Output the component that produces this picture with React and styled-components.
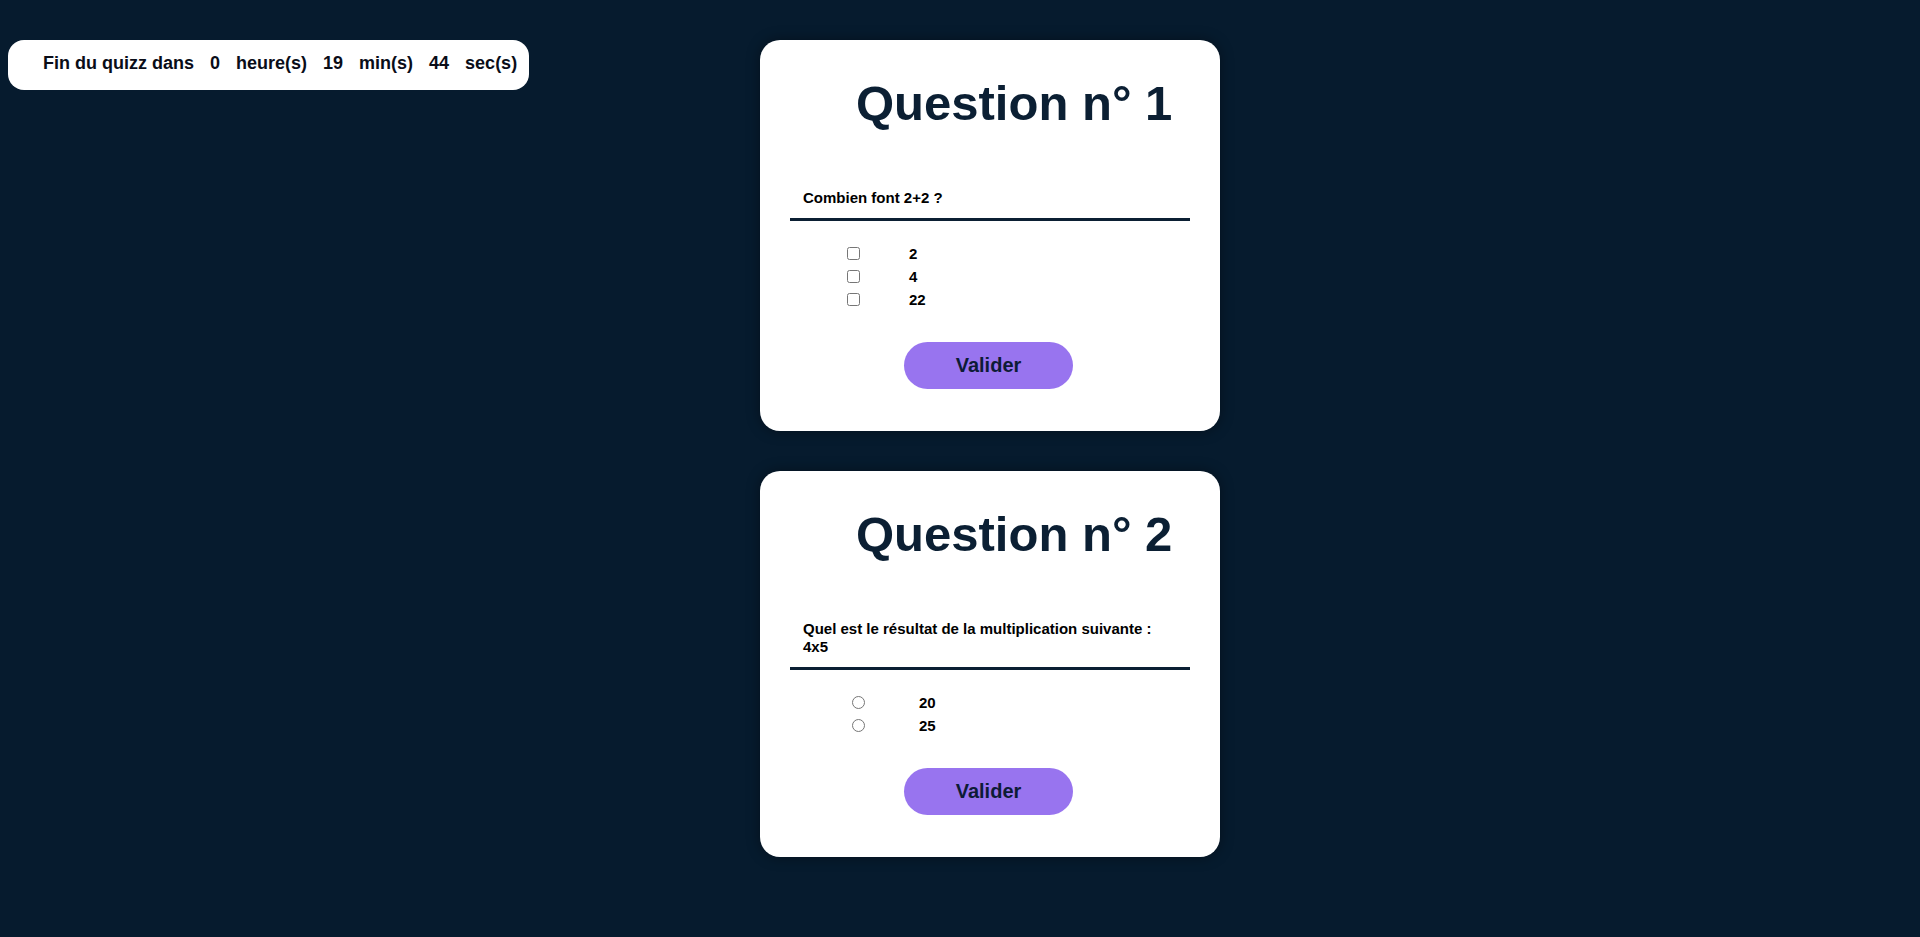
import React from 'react';
import styled, { createGlobalStyle, css } from 'styled-components';

const GlobalStyle = createGlobalStyle`
  body {
    margin: 0;
    background: #061b2e;
    font-family: "Liberation Sans", Arial, sans-serif;
  }
`;

const navy = '#0b1f33';

const questions = [
  {
    id: 1,
    text: 'Combien font 2+2 ?',
    kind: 'checkbox',
    answers: ['2', '4', '22'],
  },
  {
    id: 2,
    text: 'Quel est le résultat de la multiplication suivante : 4x5',
    kind: 'radio',
    answers: ['20', '25'],
  },
];

const Page = styled.div`
  display: flex;
  align-items: flex-start;
  padding: 40px 8px 79px;
  min-height: 937px;
  box-sizing: border-box;
`;

const Timer = styled.div`
  display: flex;
  align-items: center;
  gap: 16px;
  width: 521px;
  height: 50px;
  box-sizing: border-box;
  padding: 0 14px 3px 35px;
  background: #ffffff;
  border-radius: 16px;
  color: #0a0d18;
  font-size: 18px;
  font-weight: 700;
  white-space: nowrap;
`;

const Column = styled.main`
  display: flex;
  flex-direction: column;
  gap: 40px;
  margin-left: 231px;
  width: 460px;
`;

const Card = styled.section`
  background: #ffffff;
  border-radius: 20px;
  padding: 36px 30px 42px;
  box-shadow: 0 0 14px rgba(0, 0, 0, 0.4);
`;

const Title = styled.h1`
  margin: 0;
  padding-left: 66px;
  color: ${navy};
  font-size: 49px;
  font-weight: 700;
  line-height: 55px;
`;

const QuestionText = styled.p`
  margin: 58px 0 0;
  padding: 0 13px 11px;
  border-bottom: 3px solid ${navy};
  color: #000000;
  font-size: 15px;
  font-weight: 700;
  line-height: 18px;
`;

const Answers = styled.ul`
  list-style: none;
  margin: 21px 0 0;
  padding: 0;
`;

const AnswerRow = styled.li`
  display: flex;
  align-items: center;
  height: 23px;
  padding-left: 57px;
  gap: 49px;
  font-size: 15px;
  font-weight: 700;
  color: #000000;

  ${(props) =>
    props.$kind === 'radio' &&
    css`
      padding-left: 62px;
      gap: 54px;
    `}

  input {
    margin: 0;
    width: 13px;
    height: 13px;
  }
`;

const Footer = styled.div`
  display: flex;
  justify-content: center;
  margin-top: 31px;
  padding-right: 3px;
`;

const ValidateButton = styled.button`
  width: 169px;
  height: 47px;
  border: none;
  border-radius: 24px;
  background: #9874ef;
  color: #0d1b36;
  font-family: inherit;
  font-size: 20px;
  font-weight: 700;
  cursor: pointer;
`;

const QuestionCard = ({ question }) => {
  return (
    <Card>
      <Title>Question n° {question.id}</Title>
      <QuestionText>{question.text}</QuestionText>
      <Answers>
        {question.answers.map((answer) => (
          <AnswerRow key={answer} $kind={question.kind}>
            <input type={question.kind} name={`q${question.id}`} />
            <span>{answer}</span>
          </AnswerRow>
        ))}
      </Answers>
      <Footer>
        <ValidateButton>Valider</ValidateButton>
      </Footer>
    </Card>
  );
};

const App = () => {
  return (
    <>
      <GlobalStyle />
      <Page>
        <Timer>
          <span>Fin du quizz dans</span>
          <span>0</span>
          <span>heure(s)</span>
          <span>19</span>
          <span>min(s)</span>
          <span>44</span>
          <span>sec(s)</span>
        </Timer>
        <Column>
          {questions.map((q) => (
            <QuestionCard key={q.id} question={q} />
          ))}
        </Column>
      </Page>
    </>
  );
};

export default App;
